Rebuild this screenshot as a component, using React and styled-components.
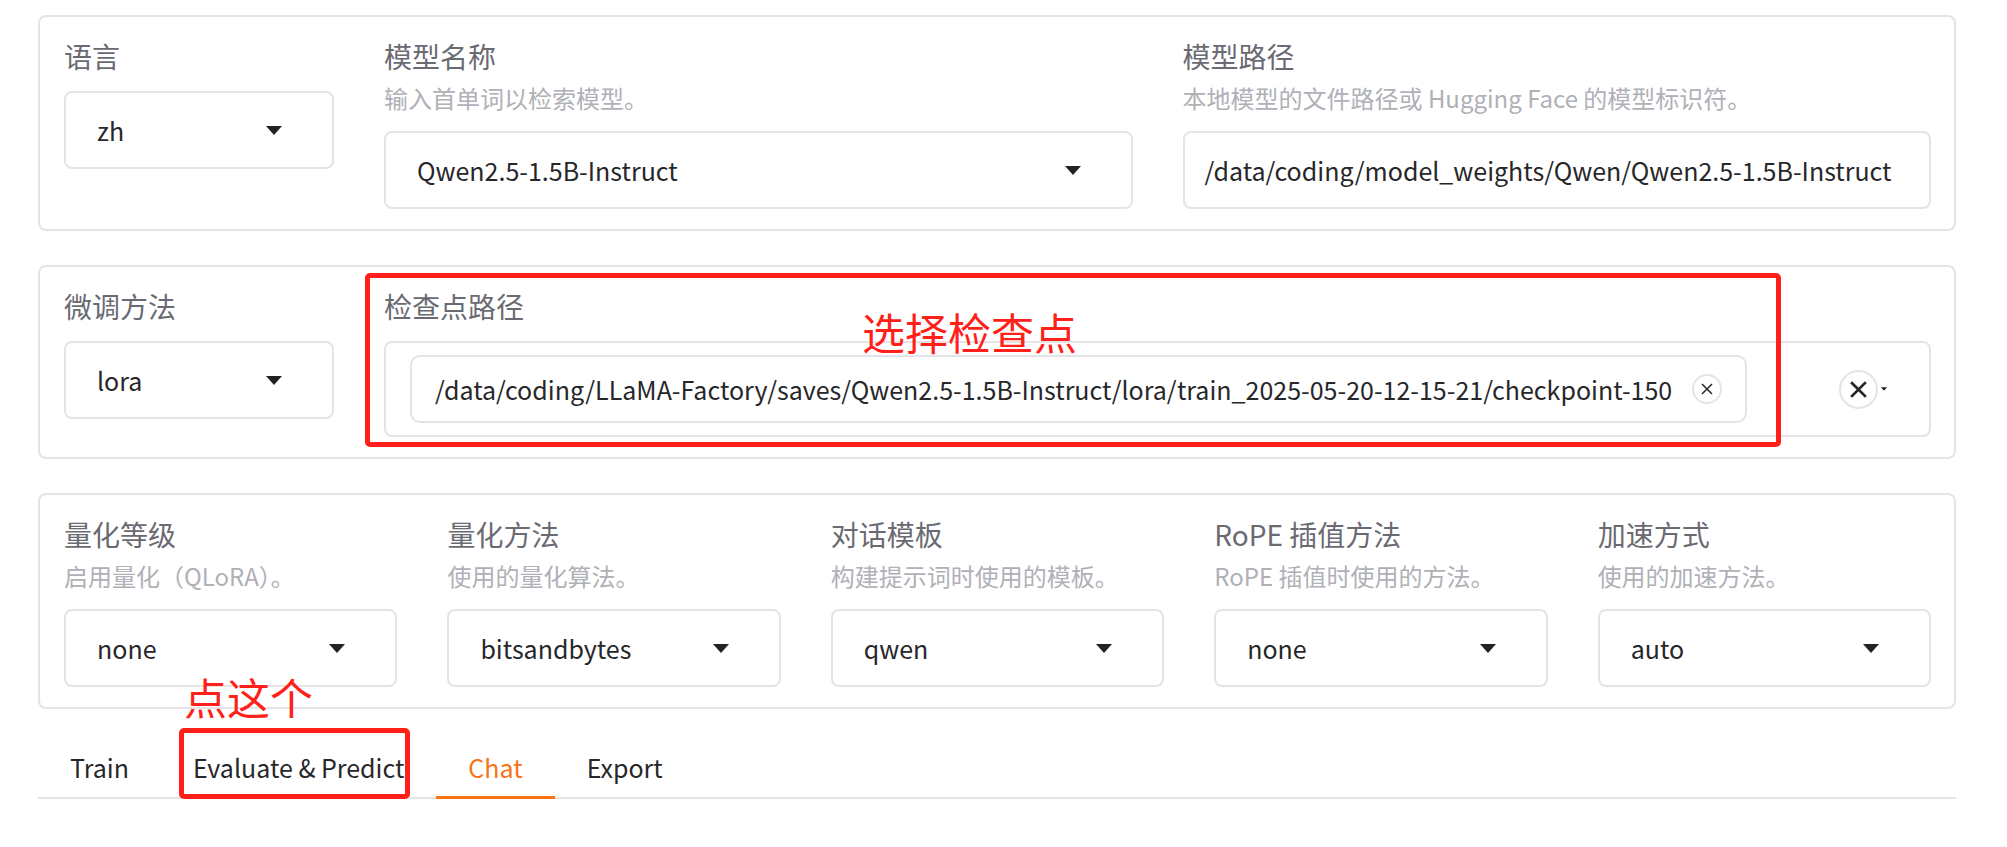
import React from 'react';
import styled, { createGlobalStyle } from 'styled-components';

const GlobalStyle = createGlobalStyle`
  html, body {
    margin: 0;
    background: #fff;
  }
  body {
    font-family: "Noto Sans CJK SC", "Noto Sans", sans-serif;
    color: #27272a;
  }
  * {
    box-sizing: border-box;
  }
`;

const Page = styled.div`
  position: relative;
  width: 1956px;
  padding: 15px 0 40px 38px;
  display: flex;
  flex-direction: column;
  gap: 34px;
`;

const Panel = styled.div`
  display: flex;
  align-items: flex-start;
  gap: 50px;
  border: 2px solid #e4e4e7;
  border-radius: 8px;
  padding: 19px 23px 20px 24px;
  background: #fff;
`;

const Field = styled.div`
  display: flex;
  flex-direction: column;
  min-width: 0;
  flex: ${({ $width }) => ($width ? `0 0 ${$width}px` : '1 1 0')};
`;

const Label = styled.span`
  font-size: 28px;
  line-height: 40px;
  color: #6a6a72;
`;

const Hint = styled.span`
  margin-top: 4px;
  font-size: 24px;
  line-height: 36px;
  color: #b0b0b7;
  white-space: nowrap;
`;

const Box = styled.div`
  margin-top: 15px;
  height: ${({ $tall }) => ($tall ? 96 : 78)}px;
  display: flex;
  align-items: center;
  border: 2px solid #e4e4e7;
  border-radius: 8px;
  background: #fff;
  font-size: 25px;
  color: #27272a;
  white-space: nowrap;
`;

const SelectBox = styled(Box)`
  justify-content: space-between;
  padding: 0 50px 0 31px;
`;

const InputBox = styled(Box)`
  padding: 0 20px;
  overflow: hidden;
`;

const MultiBox = styled(Box)`
  padding: 12px 42px 12px 24px;
`;

const Chip = styled.div`
  height: 68px;
  display: flex;
  align-items: center;
  gap: 20px;
  padding: 0 23px;
  border: 2px solid #e4e4e7;
  border-radius: 10px;
`;

const Controls = styled.div`
  margin-left: auto;
  display: flex;
  align-items: center;
  gap: 3px;
`;

const ClearButton = styled.span`
  width: ${({ $size }) => $size}px;
  height: ${({ $size }) => $size}px;
  flex: none;
  display: flex;
  align-items: center;
  justify-content: center;
  border: 2px solid #e4e4e7;
  border-radius: 50%;
  color: #27272a;
`;

const Tabs = styled.div`
  margin-top: -4px;
  display: flex;
  border-bottom: 2px solid #e4e4e7;
`;

const Tab = styled.div`
  position: relative;
  height: 58px;
  padding: 0 32px;
  font-size: 25px;
  line-height: 56px;
  color: ${({ $active }) => ($active ? '#f97316' : '#27272a')};

  &::after {
    content: '';
    display: ${({ $active }) => ($active ? 'block' : 'none')};
    position: absolute;
    left: 0;
    right: 0;
    bottom: -2px;
    height: 3px;
    background: #f97316;
  }
`;

const Frame = styled.div`
  position: absolute;
  border: 5px solid #ff2119;
  border-radius: 5px;
  pointer-events: none;
`;

const Note = styled.div`
  position: absolute;
  font-size: 43px;
  line-height: 43px;
  color: #ff2119;
  white-space: nowrap;
`;

const Caret = ({ w = 16, h = 9 }) => (
  <svg width={w} height={h} viewBox="0 0 16 9">
    <path d="M0 0 H16 L8 9 Z" fill="#222" />
  </svg>
);

const Cross = ({ size, stroke }) => (
  <svg width={size} height={size} viewBox="0 0 16 16">
    <path
      d="M2 2 L14 14 M14 2 L2 14"
      stroke="#27272a"
      strokeWidth={stroke}
      strokeLinecap="square"
      fill="none"
    />
  </svg>
);

const Select = ({ value }) => (
  <SelectBox>
    <span>{value}</span>
    <Caret />
  </SelectBox>
);

const quantFields = [
  { label: '量化等级', hint: '启用量化（QLoRA）。', value: 'none' },
  { label: '量化方法', hint: '使用的量化算法。', value: 'bitsandbytes' },
  { label: '对话模板', hint: '构建提示词时使用的模板。', value: 'qwen' },
  { label: 'RoPE 插值方法', hint: 'RoPE 插值时使用的方法。', value: 'none' },
  { label: '加速方式', hint: '使用的加速方法。', value: 'auto' },
];

const tabs = ['Train', 'Evaluate & Predict', 'Chat', 'Export'];

export default function App() {
  return (
    <>
      <GlobalStyle />
      <Page>
        <Panel>
          <Field $width={270}>
            <Label>语言</Label>
            <Select value="zh" />
          </Field>
          <Field>
            <Label>模型名称</Label>
            <Hint>输入首单词以检索模型。</Hint>
            <Select value="Qwen2.5-1.5B-Instruct" />
          </Field>
          <Field>
            <Label>模型路径</Label>
            <Hint>本地模型的文件路径或 Hugging Face 的模型标识符。</Hint>
            <InputBox>/data/coding/model_weights/Qwen/Qwen2.5-1.5B-Instruct</InputBox>
          </Field>
        </Panel>

        <Panel>
          <Field $width={270}>
            <Label>微调方法</Label>
            <Select value="lora" />
          </Field>
          <Field>
            <Label>检查点路径</Label>
            <MultiBox $tall>
              <Chip>
                <span>
                  /data/coding/LLaMA-Factory/saves/Qwen2.5-1.5B-Instruct/lora/train_2025-05-20-12-15-21/checkpoint-150
                </span>
                <ClearButton $size={30}>
                  <Cross size={12} stroke={2} />
                </ClearButton>
              </Chip>
              <Controls>
                <ClearButton $size={39}>
                  <Cross size={17} stroke={2.6} />
                </ClearButton>
                <Caret w={6} h={4} />
              </Controls>
            </MultiBox>
          </Field>
        </Panel>

        <Panel>
          {quantFields.map(({ label, hint, value }) => (
            <Field key={label}>
              <Label>{label}</Label>
              <Hint>{hint}</Hint>
              <Select value={value} />
            </Field>
          ))}
        </Panel>

        <Tabs>
          {tabs.map((name) => (
            <Tab key={name} $active={name === 'Chat'}>
              {name}
            </Tab>
          ))}
        </Tabs>

        <Frame style={{ left: 365, top: 273, width: 1416, height: 174 }} />
        <Note style={{ left: 862, top: 310 }}>选择检查点</Note>
        <Frame style={{ left: 179, top: 728, width: 231, height: 71 }} />
        <Note style={{ left: 184, top: 675 }}>点这个</Note>
      </Page>
    </>
  );
}
